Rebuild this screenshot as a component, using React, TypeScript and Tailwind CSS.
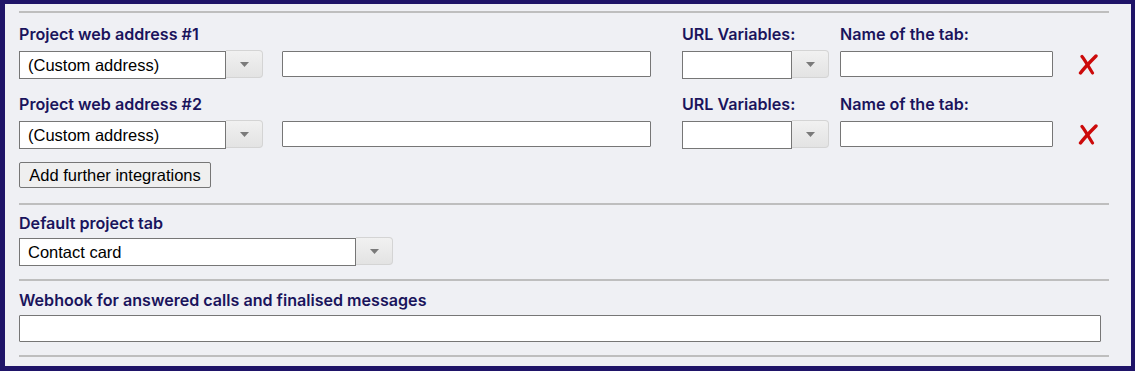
import React from 'react'

const labelCls = "block font-['Inter',sans-serif] font-semibold text-[16.1px] leading-[20px] text-[#1a145c]"
const fieldFont = "font-['Liberation_Sans',Arial,sans-serif] text-[16.5px] text-black"

function Divider() {
  return <div className="h-[2px] bg-[#bebebe]" />
}

function SelectBox({ value, width }: { value?: string; width: string }) {
  return (
    <div className="flex h-[30px] items-stretch">
      <div
        className={`${width} ${fieldFont} mt-px mb-px flex items-center border border-[#767676] bg-white pl-[8px] leading-none`}
      >
        {value}
      </div>
      <div className="mb-[2px] flex w-[37px] items-center justify-center rounded-r-[4px] border border-l-0 border-[#d4d4d4] bg-gradient-to-b from-[#f1f1f1] to-[#e3e3e3]">
        <svg width="9" height="5" viewBox="0 0 9 5">
          <path d="M0 0h9L4.5 5z" fill="#7a7a7a" />
        </svg>
      </div>
    </div>
  )
}

function TextBox({ width, height = 'h-[26px]' }: { width: string; height?: string }) {
  return <div className={`${width} ${height} rounded-[1px] border border-[#767676] bg-white`} />
}

function RemoveIcon() {
  return (
    <svg width="20" height="21" viewBox="0 0 20 21" className="block">
      <path d="M4 2.5C7.5 7 11 13.5 14.5 19" stroke="#cc0a0a" strokeWidth="3.2" strokeLinecap="round" fill="none" />
      <path d="M18 2C12.5 7.5 7 13 2.5 19" stroke="#cc0a0a" strokeWidth="3.4" strokeLinecap="round" fill="none" />
    </svg>
  )
}

function AddressRow({ n, top }: { n: number; top: string }) {
  return (
    <div className={`${top} flex items-start`}>
      <div className="w-[244px] shrink-0">
        <span className={`${labelCls} whitespace-nowrap`}>Project web address #{n}</span>
        <div className="mt-[6px]">
          <SelectBox value="(Custom address)" width="w-[207px]" />
        </div>
      </div>
      <div className="ml-[19px] shrink-0 pt-[27px]">
        <TextBox width="w-[369px]" />
      </div>
      <div className="ml-[31px] w-[147px] shrink-0">
        <span className={labelCls}>URL Variables:</span>
        <div className="mt-[6px]">
          <SelectBox width="w-[110px]" />
        </div>
      </div>
      <div className="ml-[11px] shrink-0">
        <span className={labelCls}>Name of the tab:</span>
        <div className="mt-[7px]">
          <TextBox width="w-[213px]" />
        </div>
      </div>
      <div className="ml-[25px] shrink-0 pt-[30px]">
        <RemoveIcon />
      </div>
    </div>
  )
}

export default function App() {
  return (
    <div className="box-border h-[371px] w-[1135px] border-b-[5px] border-l-[5px] border-r-4 border-t-4 border-[#1f1468] bg-[#eff0f4] pl-[14px] pr-[22px] pt-[7px]">
      <Divider />

      <AddressRow n={1} top="mt-[11px]" />
      <AddressRow n={2} top="mt-[14px]" />

      <button className={`${fieldFont} mt-[12px] block h-[26px] w-[192px] rounded-[2px] border border-[#767676] bg-[#efefef] leading-none`}>
        Add further integrations
      </button>

      <div className="mt-[15px]">
        <Divider />
      </div>

      <div className="mt-[8px]">
        <span className={labelCls}>Default project tab</span>
        <div className="mt-[4px]">
          <SelectBox value="Contact card" width="w-[337px]" />
        </div>
      </div>

      <div className="mt-[12px]">
        <Divider />
      </div>

      <div className="mt-[9px]">
        <span className={labelCls}>Webhook for answered calls and finalised messages</span>
        <div className="mt-[5px]">
          <TextBox width="w-[1082px]" height="h-[27px]" />
        </div>
      </div>

      <div className="mt-[13px]">
        <Divider />
      </div>
    </div>
  )
}
